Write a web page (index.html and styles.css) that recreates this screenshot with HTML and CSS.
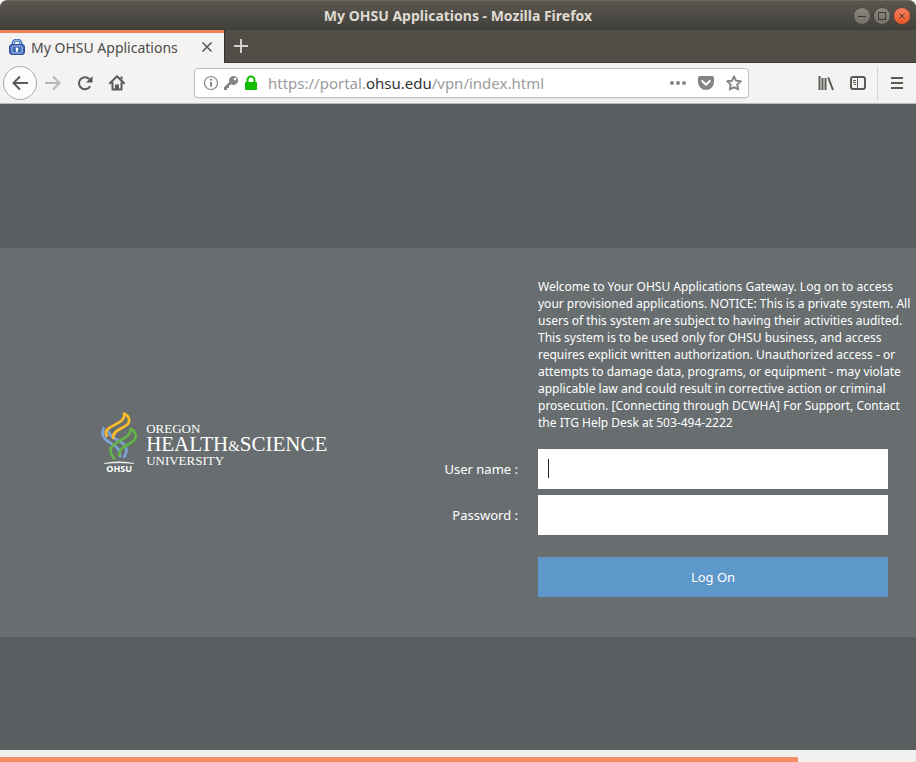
FILE: index.html
```html
<!DOCTYPE html>
<html lang="en">
<head>
<meta charset="utf-8">
<title>My OHSU Applications</title>
<link rel="stylesheet" href="styles.css">
</head>
<body>
<header class="titlebar">
  <h1 class="window-title">My OHSU Applications - Mozilla Firefox</h1>
  <div class="window-controls">
    <button class="window-button" type="button" aria-label="Minimize"><svg width="18" height="18" viewBox="0 0 18 18"><path d="M5 9.500h8"/></svg></button>
    <button class="window-button" type="button" aria-label="Maximize"><svg width="18" height="18" viewBox="0 0 18 18"><path d="M5.500 5.500h7v7h-7z"/></svg></button>
    <button class="window-button close" type="button" aria-label="Close"><svg width="18" height="18" viewBox="0 0 18 18"><path d="M6.500 6.500l5 5m0-5l-5 5"/></svg></button>
  </div>
</header>
<div class="tabstrip">
  <div class="tab">
    <svg width="16" height="16" viewBox="0 0 16 16"><path d="M4 7V5a4 4 0 0 1 8 0v2" fill="none" stroke="#3a66b5" stroke-width="3"/><path d="M4 7V5a4 4 0 0 1 8 0v2" fill="none" stroke="#a9c9ee" stroke-width="1"/><rect x=".5" y="5.500" width="15" height="10" rx="2.500" fill="#3f67b4" stroke="#2c4f9c"/><rect x="3" y="7" width="10" height="7" rx="1" fill="none" stroke="#a9c2e8"/><path d="M8 8.500a1.500 1.500 0 0 1 .8 2.700V13H7.200v-1.800A1.500 1.500 0 0 1 8 8.500z" fill="#fff"/></svg>
    <span class="tab-title">My OHSU Applications</span>
    <button class="tab-close" type="button" aria-label="Close tab"><svg width="12" height="12" viewBox="0 0 12 12"><path d="M1.500 1.500l9 9m0-9l-9 9" fill="none" stroke="#5c5a57" stroke-width="1.600"/></svg></button>
  </div>
  <button class="new-tab" type="button" aria-label="New tab"><svg width="14" height="14" viewBox="0 0 14 14"><path d="M7 0v14M0 7h14" stroke="#d2d0cb" stroke-width="2"/></svg></button>
</div>
<nav class="toolbar" aria-label="Browser">
  <button class="icon-button back" type="button" aria-label="Back"><svg width="16" height="16" viewBox="0 0 16 16"><path d="M16 8H1.500M8 1.500L1.500 8 8 14.500"/></svg></button>
  <button class="icon-button forward" type="button" aria-label="Forward"><svg width="16" height="16" viewBox="0 0 16 16"><path d="M0 8h14.500M8 1.500L14.500 8 8 14.500"/></svg></button>
  <button class="icon-button" type="button" aria-label="Reload"><svg width="16" height="16" viewBox="0 0 16 16"><path d="M13.200 11.200A6 6 0 1 1 12.300 4"/><path class="solid" d="M15.500 1v6.500H9z"/></svg></button>
  <button class="icon-button" type="button" aria-label="Home"><svg width="16" height="16" viewBox="0 0 16 16"><path d="M1 8.300L8 1.300l7 7M3.500 8v6.500h9V8" stroke-linejoin="round" stroke-linecap="round"/><path class="solid" d="M6 15V9.500h4V15zM11.500 1.500h2V5l-2-2z"/><path d="M8.500 12v1" stroke="#fff" stroke-width="1"/></svg></button>
  <div class="urlbar">
    <svg width="16" height="16" viewBox="0 0 16 16"><circle cx="8" cy="8" r="6.500" fill="none" stroke="#858585" stroke-width="1.200"/><path d="M8 7v4.500" stroke="#858585" stroke-width="2"/><circle cx="8" cy="4.700" r="1.100" fill="#858585"/></svg>
    <svg width="16" height="16" viewBox="0 0 16 16"><path fill="#858585" fill-rule="evenodd" d="M10.500 1A4.500 4.500 0 0 0 6.300 7L1 12.200V15h3v-2h2v-2l2-1.800A4.500 4.500 0 1 0 10.500 1zM12 2.800a1.300 1.300 0 1 1 0 2.600 1.300 1.300 0 0 1 0-2.600z"/></svg>
    <svg width="16" height="16" viewBox="0 0 16 16"><rect x="2" y="7" width="12" height="8" rx="1" fill="#12bc00"/><path d="M4.500 8V5a3.500 3.500 0 0 1 7 0v3" fill="none" stroke="#12bc00" stroke-width="2"/></svg>
    <span class="url">https://portal.<b>ohsu.edu</b>/vpn/index.html</span>
    <svg width="16" height="16" viewBox="0 0 16 16" fill="#858585"><circle cx="2" cy="8" r="2"/><circle cx="8" cy="8" r="2"/><circle cx="14" cy="8" r="2"/></svg>
    <svg width="16" height="16" viewBox="0 0 16 16"><path d="M2 1h12a2 2 0 0 1 2 2v4a8 8 0 0 1-16 0V3a2 2 0 0 1 2-2z" fill="#858585"/><path d="M4.200 6L8 9.700 11.800 6" fill="none" stroke="#fff" stroke-width="2" stroke-linecap="round" stroke-linejoin="round"/></svg>
    <svg width="16" height="16" viewBox="0 0 16 16"><path d="M8 1.300l2 4.400 4.800.6-3.600 3.300 1 4.900L8 12.100l-4.200 2.400 1-4.900L1.200 6.300 6 5.700z" fill="none" stroke="#858585" stroke-width="1.900" stroke-linejoin="round"/></svg>
  </div>
  <button class="icon-button" type="button" aria-label="Library"><svg width="16" height="16" viewBox="0 0 16 16"><path d="M1.500 1v14M4.500 3v12M7.500 3v12M10.200 2.500L15 15"/></svg></button>
  <button class="icon-button" type="button" aria-label="Sidebars"><svg width="16" height="16" viewBox="0 0 16 16"><rect x="1" y="2" width="14" height="12" rx="2" fill="none"/><path d="M7.500 2v12M3 5.500h3M3 7.500h3M4 9.500h2" stroke-width="1"/></svg></button>
  <button class="icon-button menu" type="button" aria-label="Open menu"><svg width="12" height="12" viewBox="0 0 12 12"><path d="M0 1h12M0 6h12M0 11h12"/></svg></button>
</nav>
<main class="page">
  <section class="login">
    <div class="brand">
      <div class="emblem">
        <svg width="36" height="48" viewBox="36 36 108 144" fill="none" stroke-width="8">
          <g stroke="#7ba3d8">
            <path d="M45 82C34 104 46 120 66 130C88 142 98 154 92 172"/>
            <path d="M56 90C60 108 78 116 94 125C114 138 118 152 104 173"/>
          </g>
          <g stroke="#fdbb2b">
            <path d="M105 38C110 60 92 66 74 76C54 86 44 94 55 110"/>
            <path d="M105 40C120 48 124 58 118 70C110 84 66 90 73 117"/>
          </g>
          <g stroke="#62b545">
            <path d="M125 84C128 106 106 114 90 124C68 136 52 150 78 178"/>
            <path d="M125 86C140 94 144 108 136 120C124 136 86 138 91 169"/>
          </g>
        </svg>
        <svg class="emblem-arc" width="30" height="3" viewBox="0 0 30 3"><path d="M0 2.500Q15-1 30 2.500Q15 .8 0 2.500z" fill="#fff" stroke="#fff" stroke-width=".5"/></svg>
        <span class="emblem-name">OHSU</span>
      </div>
      <div class="wordmark"><span class="small-line">OREGON</span><span class="large-line">HEALTH<span class="amp">&amp;</span>SCIENCE</span><span class="small-line">UNIVERSITY</span></div>
    </div>
    <form class="login-form">
      <p class="notice">Welcome to Your OHSU Applications Gateway. Log on to access<br>your provisioned applications. NOTICE: This is a private system. All<br>users of this system are subject to having their activities audited.<br>This system is to be used only for OHSU business, and access<br>requires explicit written authorization. Unauthorized access - or<br>attempts to damage data, programs, or equipment - may violate<br>applicable law and could result in corrective action or criminal<br>prosecution. [Connecting through DCWHA] For Support, Contact<br>the ITG Help Desk at 503-494-2222</p>
      <label for="user">User name :</label>
      <div class="field"><input id="user" type="text"><span class="caret"></span></div>
      <label for="password">Password :</label>
      <div class="field"><input id="password" type="password"></div>
      <button class="submit" type="submit">Log On</button>
    </form>
  </section>
</main>
<footer class="loading"><div class="loading-bar"></div></footer>
</body>
</html>
```
FILE: styles.css
```css
* { box-sizing: border-box; }
body {
  margin: 0;
  min-height: 100vh;
  display: flex;
  flex-direction: column;
  background: #fff;
  font-family: "Noto Sans", sans-serif;
  font-size: 14px;
}
button { padding: 0; border: 0; background: none; font: inherit; }
svg { display: block; flex: none; }

.titlebar {
  height: 30px;
  display: grid;
  grid-template-columns: 1fr auto 1fr;
  align-items: center;
  padding: 0 5px;
  border-radius: 7px 7px 0 0;
  background: linear-gradient(#5a574f, #403f3a);
  border-top: 1px solid #6b6860;
}
.window-title {
  grid-column: 2;
  margin: 0;
  font-size: 14px;
  line-height: 20px;
  font-weight: 700;
  color: #dfdbd2;
}
.window-controls { display: flex; justify-content: flex-end; gap: 2px; }
.window-button {
  width: 18px;
  height: 18px;
  border-radius: 50%;
  background: linear-gradient(#8b8980, #716f67);
  box-shadow: inset 0 0 0 1px #3b3a35;
}
.window-button path { fill: none; stroke: #3b3a35; stroke-width: 1; }
.window-button.close { background: linear-gradient(#f88260, #e75420); }

.tabstrip { height: 33px; display: flex; background: #504d46; border-bottom: 1px solid #3b3934; }
.tab {
  width: 224px;
  height: 33px;
  display: flex;
  align-items: center;
  gap: 6px;
  padding: 0 11px 2px 9px;
  background: #f4f3f2;
  border-top: 3px solid #ef8155;
  color: #4c4c4c;
}
.tab-title { flex: 1; white-space: nowrap; }
.new-tab { width: 33px; display: grid; place-items: center; border-left: 1px solid #35332f; }

.toolbar {
  height: 41px;
  display: flex;
  align-items: center;
  padding: 0 0 0 3px;
  background: #f4f3f2;
  border-bottom: 1px solid #bcbbb8;
}
.icon-button { width: 32px; display: grid; place-items: center; }
.toolbar .icon-button path, .toolbar .icon-button rect { stroke: #5c5a57; stroke-width: 2; fill: none; }
.toolbar .icon-button .solid { fill: #5c5a57; stroke: none; }
.toolbar .icon-button path[stroke-width="1"] { stroke-width: 1; }
.toolbar .back { width: 34px; height: 34px; border: 1px solid #aaa9a7; border-radius: 50%; background: #fcfcfc; }
.toolbar .forward path { stroke: #b8b7b5; }
.toolbar .menu { height: 34px; width: 39px; margin-left: 3px; border-left: 1px solid #d6d5d3; }
.urlbar {
  flex: 1;
  height: 30px;
  display: flex;
  align-items: center;
  gap: 12px;
  margin: 0 61px;
  padding: 0 6px 0 8px;
  border: 1px solid #c1c0be;
  border-radius: 4px;
  background: #fff;
  box-shadow: 0 1px 2px #0001;
}
.urlbar svg + svg:nth-child(-n+3) { margin-left: -8px; }
.url { flex: 1; margin-left: -3px; font-size: 15px; color: #9b9b9b; white-space: nowrap; }
.url b { font-weight: 400; color: #333; }

.page { flex: 1; padding-top: 144px; background: #585e60; }
.login {
  display: grid;
  grid-template-columns: 1fr auto;
  padding: 30px 2px 40px 0;
  background: #686e70;
  color: #fff;
}
.brand { display: flex; align-items: center; justify-content: center; gap: 9px; padding: 10px 16px 0 0; }
.emblem { display: flex; flex-direction: column; align-items: center; }
.emblem-arc { margin-top: 1px; }
.emblem-name { font: 700 9px/10px "Open Sans", sans-serif; }
.wordmark { display: flex; flex-direction: column; padding-top: 4px; font-family: "Liberation Serif", serif; }
.small-line { font-size: 13px; line-height: 14px; }
.large-line { font-size: 21px; line-height: 16px; }
.amp { font-size: 15px; }
.login-form {
  display: grid;
  grid-template-columns: auto 376px;
  column-gap: 20px;
  row-gap: 6px;
  align-items: center;
  justify-items: end;
}
.login-form label, .submit { font-size: 13px; }
.notice { grid-column: 2; justify-self: start; margin: 0 0 12px; font-size: 12px; line-height: 17px; }
.field { position: relative; width: 350px; justify-self: start; }
.field input { display: block; width: 100%; height: 40px; padding: 0 10px; border: 0; background: #fff; font: inherit; }
.caret { position: absolute; left: 10px; top: 10px; width: 1px; height: 19px; background: #222; }
.submit {
  grid-column: 2;
  justify-self: start;
  width: 350px;
  height: 40px;
  margin-top: 16px;
  background: #5e98ca;
  color: #fff;
}
.loading { height: 12px; padding-top: 7px; background: #f2f1ef; }
.loading-bar { width: 87.100%; height: 5px; background: #f58e66; }
```
